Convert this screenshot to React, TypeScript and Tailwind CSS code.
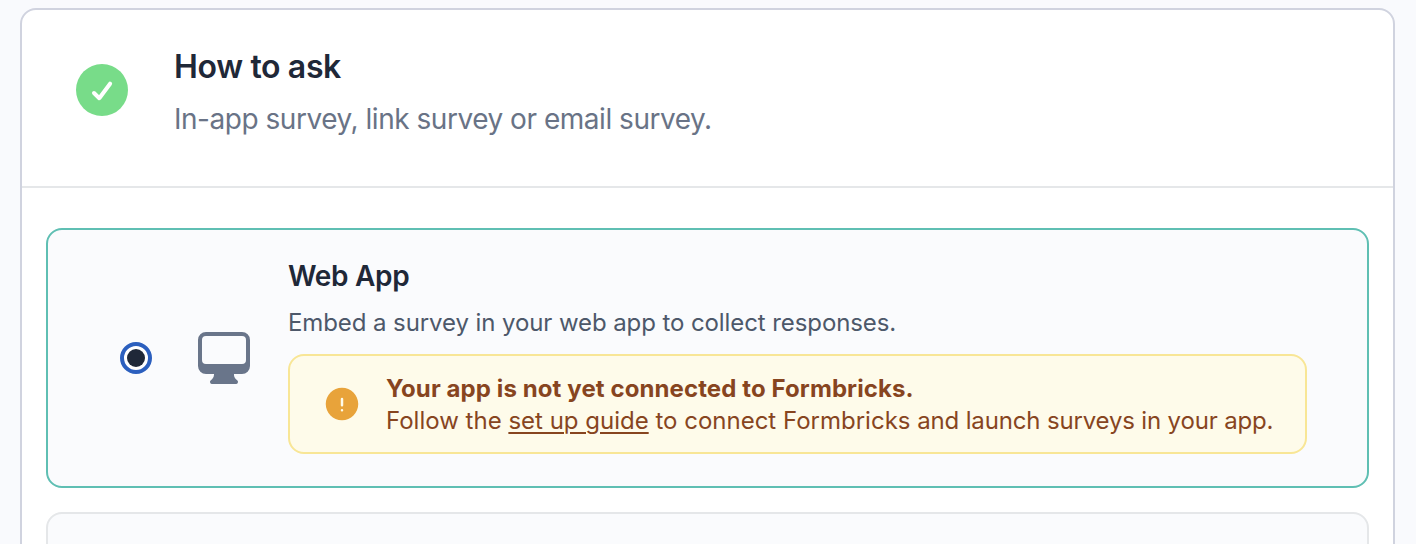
export default function App() {
  return (
    <div className="h-[544px] overflow-hidden bg-[#f9fafd] pl-5 pr-[21px] pt-2 font-['Inter',sans-serif] antialiased">
      <section className="h-[600px] rounded-2xl border-2 border-[#d0d3df] bg-white">
        <header className="flex h-[178px] border-b-2 border-[#e5e7e9] pl-[54px] pt-[37px]">
          <div className="mt-[17px] flex size-[52px] shrink-0 items-center justify-center rounded-full bg-[#78dc89]">
            <svg viewBox="0 0 24 24" className="size-6 fill-none stroke-white">
              <path d="m4 15 5.3 5.2 10.8-14.5" strokeWidth="4" strokeLinecap="round" strokeLinejoin="round" />
            </svg>
          </div>
          <div className="ml-[46px]">
            <h2 className="text-[32px] leading-10 font-semibold tracking-[-0.35px] text-[#1f2838]">How to ask</h2>
            <p className="mt-3 text-[28px] leading-10 tracking-[-0.47px] text-[#697386]">In-app survey, link survey or email survey.</p>
          </div>
        </header>
        <div className="px-6 pt-10">
          <article className="flex h-[260px] items-center rounded-2xl border-2 border-[#5fbfb3] bg-[#fafbfd] pl-[72px]">
            <div className="flex size-8 items-center justify-center rounded-full border-4 border-[#2b5fbe] bg-white">
              <div className="size-[18px] rounded-full bg-[#1f2838]" />
            </div>
            <svg viewBox="0 0 24 24" className="ml-10 size-16 fill-[#69758a]">
              <path fillRule="evenodd" d="M2.25 5.25a3 3 0 0 1 3-3h13.5a3 3 0 0 1 3 3V15a3 3 0 0 1-3 3h-3v.257c0 .597.237 1.17.659 1.591l.621.622a.75.75 0 0 1-.53 1.28h-9a.75.75 0 0 1-.53-1.28l.621-.622a2.25 2.25 0 0 0 .659-1.59V18h-3a3 3 0 0 1-3-3V5.25Zm1.5 0v7.5a1.5 1.5 0 0 0 1.5 1.5h13.5a1.5 1.5 0 0 0 1.5-1.5v-7.5a1.5 1.5 0 0 0-1.5-1.5H5.25a1.5 1.5 0 0 0-1.5 1.5Z" clipRule="evenodd" />
            </svg>
            <div className="ml-8 w-[1019px] pb-1">
              <h3 className="text-[28px] leading-9 font-semibold tracking-[-0.3px] text-[#1f2838]">Web App</h3>
              <p className="mt-[13px] text-2xl leading-8 tracking-[-0.09px] text-[#4d586a]">Embed a survey in your web app to collect responses.</p>
              <div className="mt-[15px] flex h-[100px] items-center rounded-2xl border-2 border-[#f8e696] bg-[#fefbea] pl-8 text-[#87451f]">
                <svg viewBox="0 0 24 24" className="size-10 shrink-0 fill-[#e8a33a]">
                  <path fillRule="evenodd" d="M2.25 12c0-5.385 4.365-9.75 9.75-9.75s9.75 4.365 9.75 9.75-4.365 9.75-9.75 9.75S2.25 17.385 2.25 12ZM12 8.25a.75.75 0 0 1 .75.75v3.75a.75.75 0 0 1-1.5 0V9a.75.75 0 0 1 .75-.75Zm0 8.25a.75.75 0 1 0 0-1.5.75.75 0 0 0 0 1.5Z" />
                </svg>
                <div className="ml-6 pt-0.5 text-2xl leading-8 whitespace-nowrap">
                  <p className="font-bold tracking-[0.1px]">Your app is not yet connected to Formbricks.</p>
                  <p>Follow the <a className="underline decoration-2 underline-offset-[3px]" href="#setup">set up guide</a> to connect Formbricks <span className="tracking-[-0.16px]">and launch surveys in your app.</span></p>
                </div>
              </div>
            </div>
          </article>
          <article className="mt-6 h-[260px] rounded-2xl border-2 border-[#e5e7e9] bg-[#fafbfd]" />
        </div>
      </section>
    </div>
  );
}
